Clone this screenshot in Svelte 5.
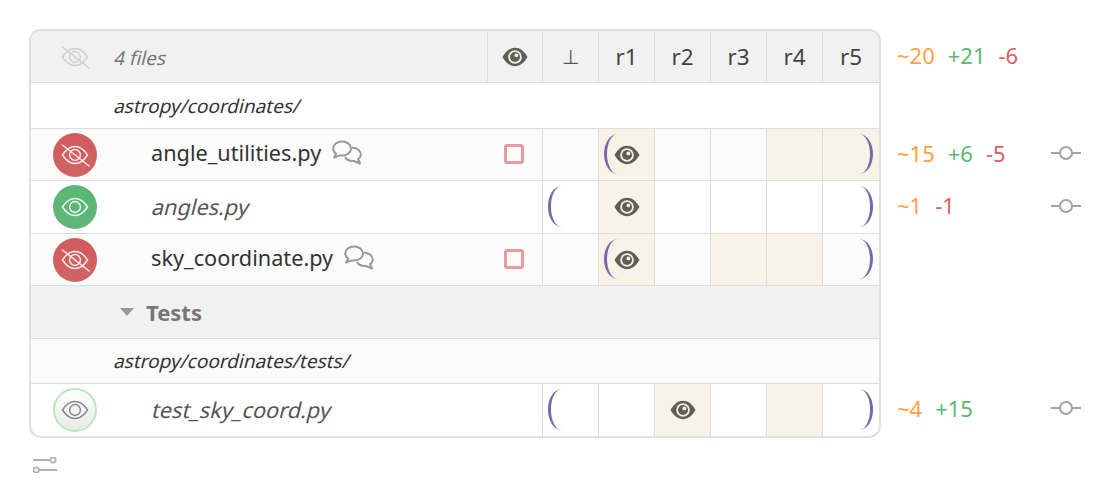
<script>
  const cols = ["base", "r1", "r2", "r3", "r4", "r5"]

  const rows = [
    { kind: "head", h: 52, stats: { m: "~20", a: "+21", d: "-6" } },
    { kind: "path", h: 46, path: "astropy/coordinates/", bg: "white" },
    {
      kind: "file", h: 52, name: "angle_utilities.py", status: "off", comments: true, box: true, alt: true,
      open: "r1", close: "r5", eye: "r1", lit: ["r1", "r4", "r5"],
      stats: { m: "~15", a: "+6", d: "-5" }, pin: true
    },
    {
      kind: "file", h: 53, name: "angles.py", status: "on", italic: true,
      open: "base", close: "r5", eye: "r1", lit: ["r1"],
      stats: { m: "~1", d: "-1" }, pin: true
    },
    {
      kind: "file", h: 52, name: "sky_coordinate.py", status: "off", comments: true, box: true, alt: true,
      open: "r1", close: "r5", eye: "r1", lit: ["r1", "r3", "r4"]
    },
    { kind: "group", h: 53, label: "Tests" },
    { kind: "path", h: 45, path: "astropy/coordinates/tests/", bg: "alt" },
    {
      kind: "file", h: 52, name: "test_sky_coord.py", status: "idle", italic: true, last: true,
      open: "base", close: "r5", eye: "r2", lit: ["r2", "r4"],
      stats: { m: "~4", a: "+15" }, pin: true
    }
  ]
</script>

{#snippet solidEye()}
  <svg class="eye" viewBox="0 0 26 20">
    <path d="M0.5 10C4 4 8 0.8 13 0.8S22 4 25.5 10C22 16 18 19.2 13 19.2S4 16 0.5 10Z" fill="#5f5f58" />
    <circle cx="13" cy="10" r="6.8" fill="#f3efe6" />
    <circle cx="13" cy="10" r="5" fill="#5f5f58" />
    <circle cx="14.4" cy="8.4" r="1.9" fill="#f3efe6" />
  </svg>
{/snippet}

{#snippet lineEye(off)}
  <svg class="line-eye" viewBox="0 0 30 30" fill="none" stroke="currentColor" stroke-width="1.5">
    <path d="M2.5 15C6 9.5 10 6.5 15 6.5S24 9.5 27.5 15C24 20.5 20 23.5 15 23.5S6 20.5 2.5 15Z" />
    <circle cx="15" cy="15" r="5.4" />
    {#if off}
      <path d="M2.5 5L29 26" stroke-linecap="round" />
    {/if}
  </svg>
{/snippet}

<div class="page">
  <div class="board">
    <div class="table">
      {#each rows as row}
        <div class="row {row.kind}" class:alt={row.alt || row.bg === "alt"} style="height: {row.h}px">
          {#if row.kind === "head"}
            <div class="name">
              <span class="status ghost">{@render lineEye(true)}</span>
              <span class="count slant">4 files</span>
            </div>
            <div class="cell">{@render solidEye()}</div>
            <div class="cell rev perp">⊥</div>
            {#each cols.slice(1) as c}
              <div class="cell rev">{c}</div>
            {/each}
          {:else if row.kind === "path"}
            <div class="dir"><span class="slant">{row.path}</span></div>
          {:else if row.kind === "group"}
            <div class="group-label"><span class="caret"></span>{row.label}</div>
          {:else}
            <div class="name">
              <span class="status {row.status}">{@render lineEye(row.status === "off")}</span>
              <span class="fname" class:slant={row.italic}>{row.name}</span>
              {#if row.comments}
                <svg class="talk" viewBox="0 0 30 26" fill="none" stroke="#999" stroke-width="2" stroke-linejoin="round">
                  <path d="M10 1.5C5 1.5 1.2 4.5 1.2 8.5C1.2 10.8 2.4 12.6 4.2 13.8L2 17.5L8 15.4C8.8 15.5 9.4 15.6 10 15.6C15 15.6 19 12.5 19 8.5S15 1.5 10 1.5Z" />
                  <path d="M20 7.6C25 8 28.8 10.8 28.8 14.4C28.8 16.4 27.6 18 26 19L28 23.5L21.8 21C17.6 21.2 14.4 19.6 13 17" />
                </svg>
              {/if}
            </div>
            <div class="cell no-line">
              {#if row.box}<span class="box"></span>{/if}
            </div>
            {#each cols as c}
              <div class="cell" class:lit={row.lit.includes(c)}>
                {#if row.open === c}<span class="bracket left"></span>{/if}
                {#if row.close === c}<span class="bracket right"></span>{/if}
                {#if row.eye === c}{@render solidEye()}{/if}
              </div>
            {/each}
          {/if}
        </div>
      {/each}
    </div>

    <div class="side">
      {#each rows as row}
        <div class="side-row" style="height: {row.h}px">
          {#if row.stats}
            <div class="stats">
              {#if row.stats.m}<span class="m">{row.stats.m}</span>{/if}
              {#if row.stats.a}<span class="a">{row.stats.a}</span>{/if}
              {#if row.stats.d}<span class="d">{row.stats.d}</span>{/if}
            </div>
          {/if}
          {#if row.pin}
            <svg class="pin" viewBox="0 0 30 14" fill="none" stroke="#a3a3a3" stroke-width="2">
              <path d="M0 7H9M21 7H30" />
              <circle cx="15" cy="7" r="6" />
            </svg>
          {/if}
        </div>
      {/each}
    </div>
  </div>

  <svg class="tune" viewBox="0 0 24 16" fill="none" stroke="#b0b0b0" stroke-width="1.8">
    <path d="M0 3H17M5.5 13H24" />
    <circle cx="20" cy="3" r="2.7" />
    <circle cx="3.2" cy="13" r="2.7" />
  </svg>
</div>

<style>
  :global(body) {
    background: #fff;
  }

  .page {
    padding: 29px 0 0 29px;
    font-family: "Noto Sans", sans-serif;
    color: #333;
  }

  .board {
    display: flex;
  }

  .table {
    width: 848px;
    border: 2px solid #e0e0e0;
    border-radius: 12px;
    overflow: hidden;
    background: #fff;
  }

  .row {
    display: grid;
    grid-template-columns: 456px 55px 56px 56px 56px 56px 56px 57px;
    box-sizing: border-box;
    border-bottom: 1px solid #ddd;
  }

  .row:last-child {
    border-bottom: none;
  }

  .row.alt {
    background: #fbfbfb;
  }

  .head,
  .group {
    background: #f1f1f1;
  }

  /* regular face sheared, the reference has no true italic */
  .slant {
    display: inline-block;
    transform: skewX(-14deg);
    transform-origin: 0 75%;
  }

  .name {
    display: flex;
    align-items: center;
    padding-left: 22px;
  }

  .status {
    width: 44px;
    height: 44px;
    flex: none;
    box-sizing: border-box;
    border-radius: 50%;
    display: flex;
    align-items: center;
    justify-content: center;
    margin-right: 54px;
  }

  .line-eye {
    width: 30px;
    height: 30px;
  }

  .status.off {
    background: linear-gradient(#d25a5a, #cf6565);
    color: #fbeaea;
  }

  .status.on {
    background: linear-gradient(#5ab672, #62b67a);
    color: #e9f7ec;
  }

  .status.idle {
    background: linear-gradient(#fff, #eaeaea);
    border: 2px solid #b6e8c0;
    color: #888;
  }

  .status.ghost {
    color: #cfcfcf;
    margin-right: 16px;
  }

  .count {
    font-size: 19px;
    color: #777;
    margin-bottom: -2px;
  }

  .dir {
    grid-column: 1 / -1;
    padding-left: 82px;
    align-self: center;
    font-size: 19px;
    color: #333;
  }

  .group-label {
    grid-column: 1 / -1;
    display: flex;
    align-items: center;
    padding-left: 89px;
    font-size: 22px;
    font-weight: 700;
    color: #777;
  }

  .caret {
    width: 0;
    height: 0;
    margin-right: 12px;
    border: 7.5px solid transparent;
    border-top: 8px solid #999;
    border-bottom: none;
  }

  .fname {
    font-size: 21.7px;
    color: #333;
    margin-bottom: 4px;
  }

  .fname.slant {
    color: #555;
    margin-bottom: 2px;
  }

  .talk {
    width: 30px;
    height: 26px;
    margin-left: 11px;
    margin-top: -3px;
  }

  .cell {
    position: relative;
    display: flex;
    align-items: center;
    justify-content: center;
    box-sizing: border-box;
    border-left: 1px solid #ddd;
  }

  .cell.no-line {
    border-left: none;
  }

  .cell.lit {
    background: #f9f3e7;
  }

  .rev {
    font-size: 22.5px;
    color: #444;
  }

  .rev.perp {
    font-size: 20px;
    color: #555;
  }

  .eye {
    width: 26px;
    height: 20px;
  }

  .box {
    width: 20px;
    height: 20px;
    box-sizing: border-box;
    border: 3px solid #e99a9a;
    border-radius: 3px;
    margin: -2px 2px 0 0;
  }

  .bracket {
    position: absolute;
    top: 5px;
    bottom: 6px;
    width: 14px;
    box-sizing: border-box;
  }

  .bracket.left {
    left: 5px;
    border-left: 3px solid #7868ac;
    border-radius: 14px 0 0 14px / 20px 0 0 20px;
  }

  .bracket.right {
    right: 6px;
    border-right: 3px solid #7868ac;
    border-radius: 0 14px 14px 0 / 0 20px 20px 0;
  }

  .side {
    padding-top: 2px;
    margin-left: 16px;
    width: 184px;
  }

  .side-row {
    position: relative;
    display: flex;
    align-items: center;
    justify-content: space-between;
  }

  .stats {
    display: flex;
    gap: 13px;
    font-size: 22px;
    margin-bottom: 5px;
  }

  .m {
    color: #ff9f43;
  }

  .a {
    color: #5cb873;
  }

  .d {
    color: #d9605f;
  }

  .pin {
    position: absolute;
    left: 154px;
    top: calc(50% - 9px);
    width: 30px;
    height: 14px;
  }

  .tune {
    display: block;
    width: 24px;
    height: 16px;
    margin: 19px 0 0 4px;
  }
</style>
